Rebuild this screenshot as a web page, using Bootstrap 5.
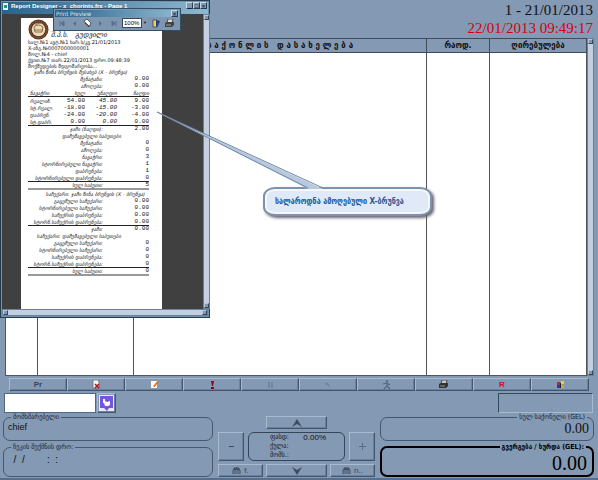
<!DOCTYPE html>
<html lang="ka">
<head>
<meta charset="utf-8">
<meta name="viewport" content="width=device-width, initial-scale=1">
<title>Report Designer</title>
<link href="https://cdn.jsdelivr.net/npm/bootstrap@5.3.0/dist/css/bootstrap.min.css" rel="stylesheet">
<style>
:root{--face:#8499b3;--lite:#aabbd0;--dark:#43566d;--sans:"Liberation Sans","DejaVu Sans",sans-serif;--cond:"DejaVu Sans Condensed","DejaVu Sans",sans-serif}
body{background:var(--face);color:#111;font-family:var(--sans);font-size:8px;line-height:10px;border-bottom:2px solid #566f8d}
button,input,select{font:inherit;border-radius:0}
.dates{font:15px/18px "Liberation Serif",serif;height:38px;padding:1px 5px 0 0}
.dates .now{color:#d8000c}
.goods-wrap{padding:0 4px 0 5px}
.goods{border-collapse:collapse;table-layout:fixed;background:#fff}
.goods th{background:var(--face);height:14px;border:1px solid #3f4b59;font:700 8px/10px "DejaVu Sans",sans-serif;text-align:center;padding:0}
.goods td{border:1px solid #555;padding:0;height:calc(100vh - 157px)}
.goods th.wide{white-space:pre}
.c1{width:32px}.c2{width:96px}.c4{width:63px}.c5{width:97px}
.sb{background:#c2d0e2;border:1px solid #6b7f98;flex:none}
.sb i{display:block;width:5px;height:5px;background:#7f97b3;border:1px solid;border-color:#b9c8da #35485e #35485e #b9c8da}
.raised{background:var(--face);border:1px solid;border-color:var(--lite) var(--dark) var(--dark) var(--lite);box-shadow:inset -1px -1px 0 #6b809a;color:#36465a;padding:0;display:flex;align-items:center;justify-content:center;gap:3px;white-space:nowrap}
.tools{padding:2px 9px 0}
.tools .raised{flex:1 1 0;height:13px}
.entry{padding:2px 5px 0 4px}
.entry input{width:92px;height:20px;border:1px solid #526781;background:#fff}
.entry .raised{width:19px;height:20px;margin-left:1px}
.well{width:95px;height:20px;border:1px solid;border-color:#35485e #a9bad0 #a9bad0 #35485e}
.bottom{display:grid;grid-template-columns:210fr 157fr 214fr;gap:5px;padding:0 4px 2px 3px;height:65px}
.frame{border:1px solid #46586e;border-radius:7px;margin:0;min-width:0;padding:0 4px}
.frame legend{float:none;width:auto;margin:0 0 0 3px;padding:0 2px;font:7px/8px var(--cond);color:#14202e}
.frame.r legend{margin:0 2px 0 auto}
.frame output{display:block}
.a{height:28px}.b{height:34px}
.who{font-size:9px;line-height:13px}
.slots{font-size:10px;line-height:18px;white-space:pre}
.sum{font:14px/15px "Liberation Serif",serif;text-align:right}
.sum.big{font-size:20px;line-height:24px;color:#000;padding-right:1px}
.frame.due{border:2px solid #000}
.frame.due legend{color:#000;font-weight:700}
.pad{display:grid;grid-template-columns:26px 19px 1fr 19px 26px;grid-template-rows:13px 29px 13px;gap:3px 0;padding-top:3px}
.pad .up{grid-column:3;margin:0 3px}
.pad .mn{grid-column:1;grid-row:2}
.pad .price{grid-column:2/5;grid-row:2;border:1px solid #36465a;border-radius:6px;margin:0 4px;font:7px/9px var(--cond);display:grid;grid-template-columns:1fr 1fr;align-content:center;padding:0 18px 0 21px;white-space:nowrap}
.price .pct{font:8px/9px "Liberation Sans",sans-serif;text-align:right}
.pad .pl{grid-column:5;grid-row:2}
.pad .l{grid-column:1/3;grid-row:3}.pad .dn{grid-column:3;grid-row:3;margin:0 3px}.pad .rr{grid-column:4/6;grid-row:3}
/* report window */
.win{position:absolute;left:0;top:0;width:210px;background:var(--face);border:1px solid #243b50;box-shadow:inset 0 0 0 1px #7194ac;padding:1px;z-index:2}
.cap{background:linear-gradient(90deg,#28628b,#8fb8d0);color:#fff;height:12px;padding:0 1px 3px 0;white-space:nowrap}
.cap .nm{font:700 6px/8px "Liberation Sans",sans-serif;margin-left:1px}
.wb{width:7px;height:7px;padding:0;line-height:4px;font-size:6px;color:#000;background:#8299b4;border:1px solid;border-color:#cbd7e4 #263a50 #263a50 #cbd7e4;display:flex;align-items:center;justify-content:center}
.desk{background:#404040;padding:4px 41px 0 19px;flex:1}
.paper{background:#fff;padding:2px 13px 33px 7px;color:#111;font:5px/6px "DejaVu Sans",sans-serif}
.paper .hd{height:19px;gap:2px}
.paper .firm{font-size:7px;line-height:8px;font-style:italic;white-space:pre}
.paper p{margin:0;white-space:pre;height:6px}
.paper p.mid{padding-left:6px;font-style:italic}
.rc{border-collapse:separate;border-spacing:0;table-layout:fixed;width:121px}
.rc th,.rc td{height:7px;line-height:6px;padding:0;text-align:right;font-weight:400;white-space:nowrap}
.rc th{font-style:italic}
.rc td{font:6px/6px "Liberation Mono",monospace}
.rc td.it{font-style:italic}
.rc th.s{padding-right:14px}
.rc th.m{padding-right:28px}
.rc th.h{padding-right:4px}
.rc th.f{text-align:left;padding-left:2px}
.rc .ln>*{box-shadow:inset 0 1px 0 #222}
.rc .top>*{height:8px;padding-top:1px}
.rc .dbl>*{box-shadow:inset 0 2px 0 #999;height:9px;padding-top:2px}
.end{height:2px;background:#999;width:121px}
.prev{position:absolute;left:53px;top:8px;width:128px;z-index:3;background:#7f96b1;border:1px solid #2f5069;padding:1px}
.prev .pc{background:linear-gradient(90deg,#28628b,#8fb8d0);color:#dce8f3;font:6px/7px var(--cond);padding:0 1px 0 1px}
.prev .bar{height:12px;padding-left:2px}
.prev .bar button{background:none;border:0;padding:0;width:9px;height:11px;display:flex;align-items:center;justify-content:center}
.prev select{appearance:none;width:20px;height:10px;border:1px solid #35485e;background:#fff;font:6px/8px "Liberation Sans",sans-serif;padding:0 1px;color:#000}
.prev .dd{width:6px;height:10px;background:#8299b4;font-size:4px;line-height:9px;text-align:center}
.lead-line{position:absolute;left:150px;top:105px;z-index:6}
.bubble{position:absolute;left:263px;top:187px;width:169px;z-index:5;background:#dfe9f8;border:2px solid #7d92ac;border-radius:12px/9px;box-shadow:inset 0 0 0 2px #f4f8fd,2px 2px 3px #667;color:#2a568f;font:700 8px/25px var(--cond);white-space:nowrap;padding-left:10px}
</style>
<script src="https://cdn.jsdelivr.net/npm/bootstrap@5.3.0/dist/js/bootstrap.bundle.min.js"></script>
</head>
<body class="d-flex flex-column min-vh-100 position-relative">
<header class="dates text-end"><div>1 - 21/01/2013</div><div class="now">22/01/2013 09:49:17</div></header>
<main class="flex-grow-1 d-flex flex-column">
<div class="goods-wrap d-flex">
<table class="goods flex-grow-1"><colgroup><col class="c1"><col class="c2"><col><col class="c4"><col class="c5"></colgroup>
<thead><tr><th></th><th></th><th class="wide">ს ა ქ ო ნ ლ ი ს   დ ა ს ა ხ ე ლ ე ბ ა</th><th>რაოდ.</th><th>ღირებულება</th></tr></thead>
<tbody><tr><td></td><td></td><td></td><td></td><td></td></tr></tbody></table>
<div class="sb d-flex flex-column justify-content-between"><i></i><i></i></div>
</div>
<div class="tools d-flex">
<button class="raised fw-bold">Pr</button>
<button class="raised" aria-label="Delete"><svg width="9" height="9"><path d="M2 0h4l1 2v6H1V1z" fill="#f5f5ee" stroke="#555" stroke-width=".6"/><path d="M3 4l4 4M7 4L3 8" stroke="#b01020" stroke-width="1.5"/></svg></button>
<button class="raised" aria-label="Edit"><svg width="9" height="9"><path d="M1 1h6v7H1z" fill="#fff"/><path d="M3 6l4-5 1 1-4 5z" fill="#f29a20"/><path d="M4 7l4-5" stroke="#e04818"/></svg></button>
<button class="raised" aria-label="Alert"><svg width="5" height="9"><path d="M1 1h3L3 6H2zM1 7h3v2H1z" fill="#9b0010"/></svg></button>
<button class="raised" aria-label="List"><svg width="7" height="7"><path d="M1 2h5M1 4h5M1 6h5" stroke="#5f748e" stroke-dasharray="2 1"/></svg></button>
<button class="raised" aria-label="Link"><svg width="8" height="8"><path d="M1 2l3 1 2 3M4 3L2 4" fill="none" stroke="#697d96"/></svg></button>
<button class="raised" aria-label="Exit"><svg width="9" height="10"><circle cx="5" cy="1.3" r="1.1" fill="#4f657f"/><path d="M1 4l4-1 3 2M5 3v3L2 9M5 6l3 3" fill="none" stroke="#4f657f" stroke-width="1.1"/></svg></button>
<button class="raised" aria-label="Print"><svg width="10" height="9"><path d="M3 0h5L7 4H2z" fill="#ccc" stroke="#333" stroke-width=".8"/><path d="M0 4l2-1h7v3L7 8H0z" fill="#333"/><path d="M1 6h5" stroke="#bbb" stroke-width=".7"/></svg></button>
<button class="raised fw-bold" style="color:#c8102e">R</button>
<button class="raised" aria-label="Users"><svg width="9" height="9"><path d="M1 2h3v3H1z" fill="#c02828"/><path d="M5 1h3v3H5z" fill="#f6cf25"/><path d="M1 5h3v3H1z" fill="#263bab"/><path d="M5 5h3v3H5z" fill="#e8a020"/><path d="M4 3h1v5H4z" fill="#222"/></svg></button>
</div>
<div class="entry d-flex">
<input type="text" aria-label="Code"><button class="raised" aria-label="Pick"><svg width="15" height="17"><path d="M0 0h15v16H0z" fill="#eee8ff"/><path d="M1 1h13v12H10l-2 3-3-3H1z" fill="#7655e0"/><path d="M4 4h2v2l2 1 3-1v4l-2 1H6L5 8H4z" fill="#fff"/></svg></button>
<div class="well ms-auto"></div>
</div>
<div class="bottom">
<div class="d-flex flex-column justify-content-between">
<fieldset class="frame a"><legend>მომხმარებელი</legend><output class="who">chief</output></fieldset>
<fieldset class="frame b"><legend>ჩეკის შექმნის დრო:</legend><output class="slots">  /  /        :  :</output></fieldset>
</div>
<div class="pad">
<button class="raised up" aria-label="Up"><svg width="10" height="8"><path d="M0 8L5 0l5 8-5-3z" fill="#3c4c60"/></svg></button>
<button class="raised mn" aria-label="Minus"><svg width="7" height="7"><path d="M1 3.5h5" stroke="#3c4c60"/></svg></button>
<div class="price"><span>ფასდ:</span><span class="pct">0.00%</span><span>ქულა:</span><span></span><span>მომს.:</span></div>
<button class="raised pl" aria-label="Plus"><svg width="7" height="7"><path d="M0 3.5h7M3.5 0v7" stroke="#596d86"/></svg></button>
<button class="raised l"><svg width="9" height="7"><path d="M1 3h7v4H1zM2 3V1h1v2M4 3V0h1v3M6 3V1h1v2M2 5h5" fill="none" stroke="#2c3a4c" stroke-width=".8"/></svg>f.</button>
<button class="raised dn" aria-label="Down"><svg width="10" height="8"><path d="M0 0l5 8 5-8-5 3z" fill="#3c4c60"/></svg></button>
<button class="raised rr"><svg width="9" height="7"><path d="M1 3h7v4H1zM2 3V1h1v2M4 3V0h1v3M6 3V1h1v2M2 5h5" fill="none" stroke="#2c3a4c" stroke-width=".8"/></svg>n..</button>
</div>
<div class="d-flex flex-column justify-content-between">
<fieldset class="frame r a"><legend>სულ საქონელი (GEL)</legend><output class="sum">0.00</output></fieldset>
<fieldset class="frame r b due"><legend>გვერგება / ხურდა (GEL):</legend><output class="sum big">0.00</output></fieldset>
</div>
</div>
</main>

<section class="win" aria-label="Report Designer">
<div class="cap d-flex align-items-start"><svg width="8" height="9"><path d="M1 1h5v7H1z" fill="#e8f4ee"/><path d="M2 3h3v3H2z" fill="#26967c"/></svg><span class="flex-grow-1 nm">Report Designer - x_chorints.frx - Page 1</span>
<button class="wb" aria-label="Minimize">_</button><button class="wb" aria-label="Maximize">□</button><button class="wb" aria-label="Close">×</button></div>
<div class="d-flex">
<div class="desk"><div class="paper">
<div class="hd d-flex align-items-center"><svg width="21" height="21" viewBox="0 0 21 21"><circle cx="10.5" cy="10.5" r="10" fill="#5d351d"/><circle cx="10.5" cy="10.5" r="8.4" fill="none" stroke="#b58c68" stroke-width=".8" stroke-dasharray="1 1"/><circle cx="10.5" cy="10.5" r="6.8" fill="#ead9b8"/><path d="M6 8q4-4 9 0l-1 5H7zM6 11h9M8 7v-2l5-1" fill="none" stroke="#8a643c" stroke-width=".9"/></svg><span class="firm align-self-end">შ.პ.ს.   გუდვილი</span></div>
<p>სალ.№1 ავტ.№1 ხარ.ს/კვ.21/01/2013</p>
<p>X-ანგ.№0007000000001</p>
<p>მოლ.№4 - chief</p>
<p>ქვით.№7 თარ.22/01/2013 დრო.09:48:39</p>
<p>მოქმედების მდგომარეობა...</p>
<p class="mid">ჯამი წინა ბრუნვის შესახებ (X - ბრუნვა)</p>
<table class="rc"><colgroup><col style="width:26px"><col style="width:31px"><col style="width:32px"><col style="width:32px"></colgroup><tbody>
<tr><th colspan="3" class="s">შენატანი:</th><td>0.00</td></tr>
<tr><th colspan="3" class="s">ამოღება:</th><td>0.00</td></tr>
<tr><th class="f">ნავაჭრი</th><th>სულ</th><th>უნაღდო</th><th>ნაღდი</th></tr>
<tr class="ln top"><th class="f">რეალიზ.</th><td>54.00</td><td class="it">45.00</td><td>9.00</td></tr>
<tr><th class="f">სტ.რეალ.</th><td>-18.00</td><td class="it">-15.00</td><td>-3.00</td></tr>
<tr><th class="f">დაბრუნ.</th><td>-24.00</td><td class="it">-20.00</td><td>-4.00</td></tr>
<tr><th class="f">სტ.დაბრ.</th><td>0.00</td><td class="it">0.00</td><td>0.00</td></tr>
<tr class="ln"><th colspan="3" class="s">ჯამი (ნაღდი):</th><td>2.00</td></tr>
<tr><th colspan="4" class="m">დამუშავებული საბუთები</th></tr>
<tr><th colspan="3" class="s">შენატანი:</th><td>0</td></tr>
<tr><th colspan="3" class="s">ამოღება:</th><td>0</td></tr>
<tr><th colspan="3" class="s">ნავაჭრი:</th><td>3</td></tr>
<tr><th colspan="3" class="s">სტორნირებული ნავაჭრი:</th><td>1</td></tr>
<tr><th colspan="3" class="s">დაბრუნება:</th><td>1</td></tr>
<tr><th colspan="3" class="s">სტორნირებული დაბრუნება:</th><td>0</td></tr>
<tr class="ln"><th colspan="3" class="s">სულ საბუთი:</th><td>5</td></tr>
<tr class="dbl"><th colspan="4" class="h">საჩუქარი: ჯამი წინა ბრუნვის (X - ბრუნვა)</th></tr>
<tr><th colspan="3" class="s">გაცემული საჩუქარი:</th><td>0.00</td></tr>
<tr><th colspan="3" class="s">სტორნირებული საჩუქარი:</th><td>0.00</td></tr>
<tr><th colspan="3" class="s">საჩუქრის დაბრუნება:</th><td>0.00</td></tr>
<tr><th colspan="3" class="s">სტორნ.საჩუქრის დაბრუნება:</th><td>0.00</td></tr>
<tr class="ln"><th colspan="3" class="s">ჯამი:</th><td>0.00</td></tr>
<tr><th colspan="4" class="m">საჩუქარი: დამუშავებული საბუთები</th></tr>
<tr><th colspan="3" class="s">გაცემული საჩუქარი:</th><td>0</td></tr>
<tr><th colspan="3" class="s">სტორნირებული საჩუქარი:</th><td>0</td></tr>
<tr><th colspan="3" class="s">საჩუქრის დაბრუნება:</th><td>0</td></tr>
<tr><th colspan="3" class="s">სტორნ.საჩუქრის დაბრუნება:</th><td>0</td></tr>
<tr class="ln"><th colspan="3" class="s">სულ საბუთი:</th><td>0</td></tr>
</tbody></table><div class="end"></div>
</div></div>
<div class="sb d-flex flex-column justify-content-between"><i></i><i></i></div>
</div>
<div class="sb d-flex justify-content-between"><i></i><i></i></div>
</section>

<section class="prev" aria-label="Print Preview">
<div class="pc d-flex justify-content-between"><span>Print Preview</span><button class="wb" aria-label="Close preview">×</button></div>
<div class="bar d-flex align-items-center gap-1">
<button aria-label="First"><svg width="6" height="7"><path d="M1 1v5M5 1L2 3.5 5 6z" stroke="#566e90" fill="#566e90"/></svg></button>
<button aria-label="Previous"><svg width="5" height="7"><path d="M4 1L1 3.5 4 6z" fill="#566e90"/></svg></button>
<button aria-label="Go to page"><svg width="9" height="9"><path d="M1 2l3-2 4 4-2 4z" fill="#fff" stroke="#333" stroke-width=".8"/><path d="M2 4l4 3" stroke="#333"/></svg></button>
<button aria-label="Next"><svg width="5" height="7"><path d="M1 1l3 2.500L1 6z" fill="#566e90"/></svg></button>
<button aria-label="Last"><svg width="6" height="7"><path d="M5 1v5M1 1l3 2.500L1 6z" stroke="#566e90" fill="#566e90"/></svg></button>
<div class="d-flex"><select aria-label="Zoom"><option>100%</option></select><span class="dd">▼</span></div>
<button aria-label="Close report"><svg width="9" height="9"><path d="M1 1h4v7H1z" fill="#e9d84a" stroke="#333" stroke-width=".7"/><path d="M4 1l4 1-2 5-2 1z" fill="#27408b"/></svg></button>
<button aria-label="Print report"><svg width="9" height="9"><path d="M3 0h5L7 4H2z" fill="#ddd" stroke="#333" stroke-width=".8"/><path d="M0 4l2-1h7v3L7 8H0z" fill="#444"/><path d="M1 6h5" stroke="#ccc" stroke-width=".7"/></svg></button>
</div>
</section>

<svg class="lead-line" width="180" height="90" aria-hidden="true"><path d="M7 7L158 84H173z" fill="#b9c9dd"/><path d="M158 83L7 7L173 83" fill="none" stroke="#7188a5"/><path d="M158 84h13l3 2h-18z" fill="#f4f8fd"/></svg>
<div class="bubble">სალაროდნა ამოღებული X-ბრუნვა</div>
</body>
</html>
